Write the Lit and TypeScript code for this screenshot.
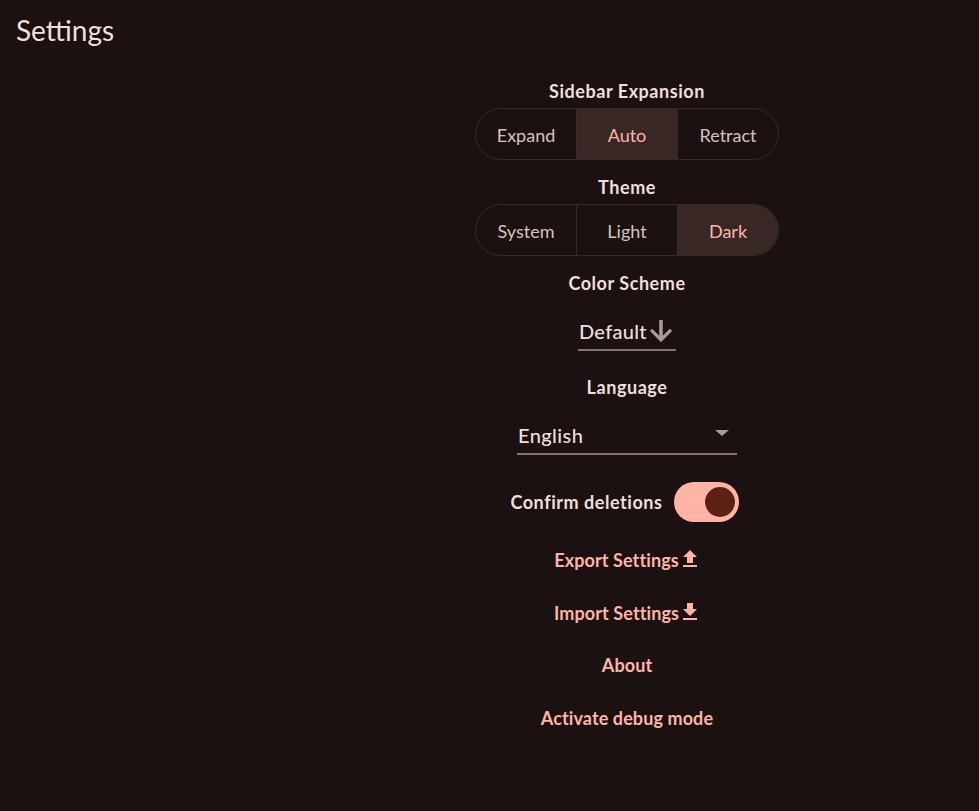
import { LitElement, html, css } from "lit";
import { customElement } from "lit/decorators.js";

@customElement("app-root")
export class AppRoot extends LitElement {
  static styles = css`
    :host { display: block; height: 811px; background: #1a1110; color: #f1dfdb; font-family: "Lato", "Noto Sans", sans-serif; overflow: hidden; }
    h1 { margin: 0; font-size: 28px; font-weight: 400; line-height: 32px; padding: 14px 16px 0; }
    .col { display: flex; flex-direction: column; align-items: center; padding-left: 275px; padding-top: 33px; }
    .label { font-size: 18px; font-weight: 700; line-height: 24px; letter-spacing: 0.55px; }
    .seg { display: flex; width: 304px; height: 52px; box-sizing: border-box; border: 1px solid #362b29; border-radius: 26px; overflow: hidden; margin: 5px 0 15px; }
    .seg div { flex: 1; display: flex; align-items: center; justify-content: center; font-size: 18px; padding-top: 1px; color: #d8c2bd; border-left: 1px solid #362b29; }
    .seg div:first-child { border-left: 0; }
    .seg .on { background: #392725; color: #ffb4a5; }
    .scheme { display: flex; align-items: center; gap: 0; width: 98px; height: 39px; border-bottom: 2px solid #857370; box-sizing: border-box; font-size: 20px; font-weight: 500; letter-spacing: 0.3px; margin-top: 17px; padding-left: 1px; }
    .scheme svg { width: 32px; height: 32px; display: block; flex: none; margin: 0 -4px 0 -2px; fill: #a89c99; stroke: #a89c99; stroke-width: 0.6; }
    .lang-label { margin-top: 24px; }
    .lang { display: flex; align-items: center; justify-content: space-between; width: 220px; height: 39px; box-sizing: border-box; border-bottom: 2px solid #857370; font-size: 20px; font-weight: 500; letter-spacing: 0.4px; margin-top: 17px; padding: 0 8px 0 1px; }
    .caret { width: 0; height: 0; border-left: 7px solid transparent; border-right: 7px solid transparent; border-top: 6px solid #a89c99; margin-bottom: 3px; }
    .confirm { display: flex; align-items: center; gap: 11px; margin: 27px 5px 0 0; }
    .switch { width: 65px; height: 40px; border-radius: 20px; background: #ffb4a5; display: flex; align-items: center; justify-content: flex-end; padding-right: 4px; box-sizing: border-box; }
    .knob { width: 30px; height: 30px; border-radius: 50%; background: #5a2114; }
    .link { display: flex; align-items: center; justify-content: center; height: 40px; font-size: 18px; font-weight: 700; letter-spacing: 0.1px; color: #ffb4a5; margin-top: 12.5px; }
    .link svg { width: 24px; height: 24px; fill: #ffb4a5; display: block; margin-bottom: 2px; margin-left: -1px; margin-right: -2px; }
    .first { margin-top: 18px; }
  `;

  render() {
    return html`
      <h1>Settings</h1>
      <div class="col">
        <div class="label">Sidebar Expansion</div>
        <div class="seg"><div>Expand</div><div class="on">Auto</div><div>Retract</div></div>
        <div class="label">Theme</div>
        <div class="seg"><div>System</div><div>Light</div><div class="on">Dark</div></div>
        <div class="label">Color Scheme</div>
        <div class="scheme">Default<svg viewBox="0 0 24 24"><path d="M20 12l-1.41-1.41L13 16.17V4h-2v12.17l-5.58-5.59L4 12l8 8 8-8z"/></svg></div>
        <div class="label lang-label">Language</div>
        <div class="lang">English<span class="caret"></span></div>
        <div class="confirm"><span class="label">Confirm deletions</span><div class="switch"><div class="knob"></div></div></div>
        <div class="link first">Export Settings<svg viewBox="0 0 24 24"><path d="M9 16h6v-6h4l-7-7-7 7h4zm-4 2h14v2H5z"/></svg></div>
        <div class="link">Import Settings<svg viewBox="0 0 24 24"><path d="M19 9h-4V3H9v6H5l7 7 7-7zM5 18v2h14v-2H5z"/></svg></div>
        <div class="link">About</div>
        <div class="link">Activate debug mode</div>
      </div>
    `;
  }
}
